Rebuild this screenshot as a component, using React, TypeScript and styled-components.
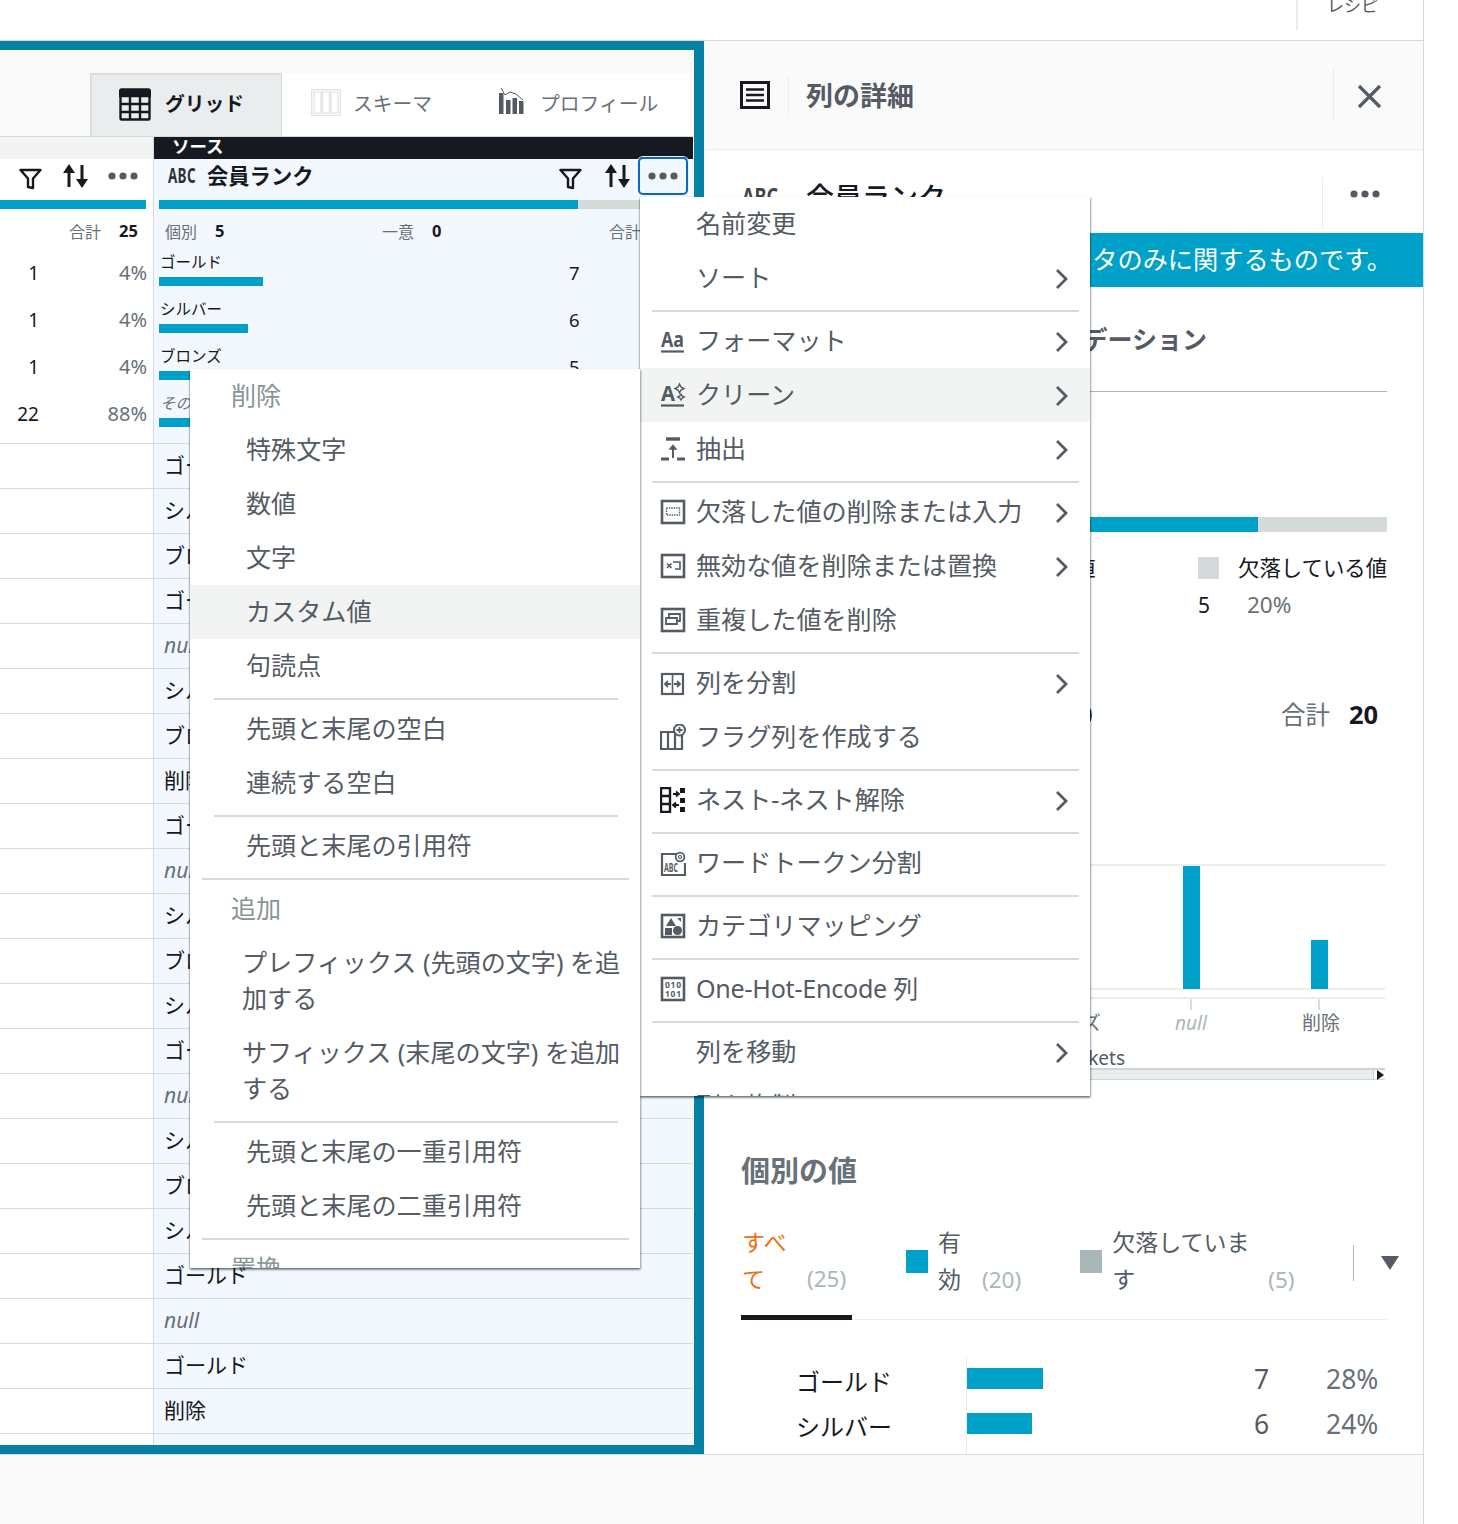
import React from "react";
import styled, { createGlobalStyle } from "styled-components";

const Global = createGlobalStyle`
  html, body { margin: 0; padding: 0; background: #fff; }
  body { font-family: "Noto Sans", "Noto Sans CJK JP", sans-serif; color: #16191f; }
  * { box-sizing: border-box; }
`;

const Page = styled.div`
  position: relative; width: 1424px; height: 1524px; overflow: hidden;
  border-right: 1px solid #d5dbdb; display: flex; flex-direction: column;
`;
const TopBar = styled.div`
  height: 41px; flex: none; border-bottom: 1px solid #d5dbdb; background: #fff;
  display: flex; justify-content: flex-end; align-items: flex-start; overflow: hidden;
`;
const RecipeTab = styled.div`
  width: 127px; height: 30px; border-left: 2px solid #eaeded; padding-left: 29px;
  font-size: 17px; line-height: 26px; color: #545b64;
  & > span { display: block; margin-top: -7px; }
`;
const Main = styled.div`display: flex; height: 1413px; flex: none;`;
const Footer = styled.div`flex: 1; background: #fafafa; border-top: 1px solid #d5dbdb;`;

const DataPanel = styled.div`
  width: 704px; flex: none; border: solid #0582a3; border-width: 9px 10px 9px 0;
  display: flex; flex-direction: column; overflow: hidden; background: #fafafa;
`;
const TabStrip = styled.div`
  height: 87px; flex: none; padding: 23px 0 0 90px; border-bottom: 1px solid #d5dbdb; display: flex;
`;
const ViewTabs = styled.div`display: flex; flex: 1; background: #fff; height: 63px;`;
const ViewTab = styled.div<{ $active?: boolean; $w: number; $pad: number; $gap: number }>`
  width: ${p => p.$w}px; padding: 0 0 5px ${p => p.$pad}px; display: flex; align-items: center; gap: ${p => p.$gap}px;
  font-size: 19.8px; font-weight: ${p => (p.$active ? 700 : 400)};
  color: ${p => (p.$active ? "#16191f" : "#687078")};
  background: ${p => (p.$active ? "#eaeded" : "#fff")};
  border: ${p => (p.$active ? "1px solid #d5dbdb" : "none")}; border-bottom: none;
  box-shadow: ${p => (p.$active ? "inset 1px 1px 2px rgba(0,0,0,.05)" : "none")};
`;
const GridIcon = styled.svg`margin-top: 3px; flex: none;`;
const ProfileIcon = styled.svg`margin-bottom: 3px; flex: none;`;
const GridArea = styled.div`display: flex; flex: 1; min-height: 0;`;
const Column = styled.div<{ $selected?: boolean }>`
  display: flex; flex-direction: column; overflow: hidden;
  width: ${p => (p.$selected ? "540px" : "154px")}; flex: none;
  background: ${p => (p.$selected ? "#f2f8fe" : "#fff")};
  border-right: 1px solid ${p => (p.$selected ? "#fff" : "#d5dbdb")};
`;
const ColumnCap = styled.div<{ $dark?: boolean }>`
  height: 22px; flex: none; overflow: hidden; padding-left: 18px;
  background: ${p => (p.$dark ? "#16191f" : "#f2f3f3")}; color: #fff;
  font-size: 17.5px; font-weight: 700; line-height: 19px;
`;
const Stats = styled.div`height: 285px; flex: none; border-bottom: 1px solid #d5dbdb; display: flex; flex-direction: column;`;
const ColHeader = styled.div<{ $selected?: boolean }>`
  height: 41px; flex: none; display: flex; align-items: center;
  padding: ${p => (p.$selected ? "0 5px 8px 14px" : "0 15px 8px 19px")};
  justify-content: ${p => (p.$selected ? "flex-start" : "space-between")};
`;
const FilterWrap = styled.span`display: flex; margin-top: 6px;`;
const TypeTag = styled.span`
  font-size: 21px; font-weight: 700; color: #2e333a; display: inline-block; width: 28px; margin: 0 11px 2px 0;
  transform: scaleX(.64); transform-origin: left center; white-space: nowrap; letter-spacing: .5px;
`;
const ColName = styled.span`font-size: 21.3px; font-weight: 700; color: #16191f; flex: 1; margin-bottom: 2px;`;
const HeaderIcons = styled.div`display: flex; align-items: center; gap: 22px; margin-right: 7px;`;
const FocusButton = styled.div`
  width: 50px; height: 38px; flex: none; border: 2.5px solid #0a68c4; border-radius: 5px;
  display: flex; align-items: center; justify-content: center; box-shadow: 0 0 0 1px #eef3f7;
`;
const CoverageBar = styled.div<{ $inset: string }>`
  height: 9px; flex: none; background: #d5dbdb; margin: ${p => p.$inset}; display: flex;
`;
const CoverageFill = styled.div`background: #00a1c9; height: 100%;`;
const TotalsA = styled.div`
  height: 41px; flex: none; display: flex; align-items: center; justify-content: flex-end; gap: 18px; padding: 2px 15px 0 0;
`;
const TotalsB = styled.div`
  height: 41px; flex: none; display: grid; grid-template-columns: 217px 227px auto; align-items: center; padding: 2px 0 0 11px;
`;
const StatPair = styled.div`display: flex; align-items: center; gap: 18px;`;
const StatLabel = styled.span`font-size: 16px; color: #687078;`;
const StatValue = styled.span`font-size: 16.5px; font-weight: 700; color: #16191f;`;
const CountRow = styled.div`height: 47px; flex: none; display: flex; align-items: center; padding: 0 6px 2px 0;`;
const CountNum = styled.span`width: 39px; text-align: right; font-size: 19px; color: #16191f;`;
const CountPct = styled.span`flex: 1; text-align: right; font-size: 20px; color: #687078;`;
const ValueRow = styled.div`height: 47px; flex: none; display: flex; padding-left: 5px;`;
const ValueMain = styled.div`width: 410px; display: flex; flex-direction: column;`;
const ValueName = styled.div<{ $italic?: boolean }>`
  height: 27px; font-size: 15.5px; line-height: 24px; padding-left: 1px; color: ${p => (p.$italic ? "#687078" : "#16191f")};
  font-style: ${p => (p.$italic ? "italic" : "normal")};
`;
const ValueBar = styled.div`height: 9px; background: #00a1c9;`;
const ValueCount = styled.div`font-size: 18.500px; line-height: 45px; color: #16191f;`;
const Cell = styled.div<{ $null?: boolean }>`
  height: 45px; flex: none; border-bottom: 1px solid #d5dbdb; padding-left: 10px;
  font-size: 21px; line-height: 43px;
  color: ${p => (p.$null ? "#687078" : "#16191f")}; font-style: ${p => (p.$null ? "italic" : "normal")};
`;

const DetailPanel = styled.div`flex: 1; overflow: hidden; background: #fff; display: flex; flex-direction: column;`;
const DetailHeader = styled.div`
  height: 109px; flex: none; background: #fafafa; border-bottom: 1px solid #eaeded;
  display: flex; align-items: center; padding-left: 36px;
`;
const HeaderDivider = styled.div`width: 1px; height: 38px; background: #eaeded; margin: 0 17px 0 18px;`;
const DetailTitle = styled.h2`margin: 0 0 2px; font-size: 27px; font-weight: 700; color: #545b64; flex: 1;`;
const CloseSlot = styled.div`
  width: 90px; height: 54px; border-left: 1px solid #eaeded; display: flex; align-items: center; padding: 2px 0 0 23px;
`;
const SubHeader = styled.div`height: 83px; flex: none; display: flex; align-items: center; padding-left: 38px; padding-top: 8px;`;
const SubTag = styled.span`
  font-size: 24px; font-weight: 700; color: #414750; width: 64px; display: inline-block;
  transform: scaleX(.75); transform-origin: left center;
`;
const SubName = styled.span`font-size: 28px; color: #16191f; flex: 1; font-weight: 500;`;
const SubMenu = styled.div`
  width: 101px; height: 50px; border-left: 1px solid #eaeded; margin-top: 13px; display: flex; align-items: center; padding: 0 0 16px 27px;
`;
const Banner = styled.div`
  height: 54px; flex: none; background: #00a1c9; color: #fff; font-size: 25.2px; line-height: 52px;
  text-align: right; padding-right: 31px; white-space: nowrap;
`;
const Section = styled.section`padding: 0 36px 0 37px; flex: none;`;
const SectionHead = styled.h3`
  margin: 35px 0 0; height: 70px; line-height: 34px; font-size: 25px; font-weight: 700; color: #545b64;
  border-bottom: 1px solid #aab7b8; text-align: right; padding-right: 180px; white-space: nowrap; overflow: hidden;
`;
const QualityBar = styled.div`height: 15px; background: #d5dbdb; margin-top: 125px; display: flex;`;
const Legend = styled.div`display: flex; margin: 25px 0 0 229px;`;
const LegendItem = styled.div<{ $w: number }>`width: ${p => p.$w}px;`;
const LegendHead = styled.div`display: flex; align-items: center; gap: 19px; font-size: 21.4px; line-height: 22px; white-space: nowrap;`;
const Swatch = styled.div<{ $color: string }>`width: 21px; height: 22px; flex: none; background: ${p => p.$color};`;
const LegendVals = styled.div`display: grid; grid-template-columns: 49px auto; margin-top: 14px; font-size: 21px; line-height: 24px;`;
const LegendPct = styled.span`color: #687078; font-size: 22.5px;`;
const ChartStats = styled.div`display: grid; grid-template-columns: 269px 271px auto; margin-top: 80px; height: 32px; align-items: center;`;
const BigPair = styled.div`display: flex; align-items: center; gap: 19px;`;
const BigLabel = styled.span`font-size: 24.5px; color: #687078; margin-top: -2px;`;
const BigValue = styled.span`font-size: 25.5px; font-weight: 700; color: #16191f;`;
const ChartSvg = styled.svg`display: block; margin-top: 135px; width: 644px; height: 178px; overflow: visible;`;
const AxisName = styled.div`font-size: 19px; line-height: 24px; color: #545b64; padding-left: 314px; margin-top: 4px;`;
const ScrollTrack = styled.div`
  width: 644px; height: 12px; margin-top: -2px; background: #eaeded; border: solid #cfd5d5; border-width: 2px 0 1px;
  display: flex; justify-content: flex-end; align-items: center;
`;
const ScrollEnd = styled.div`
  width: 12px; height: 100%; background: #fafafa; border-left: 1px solid #cfd5d5;
  display: flex; align-items: center; justify-content: flex-end; padding-right: 1px;
`;
const ScrollArrow = styled.div`
  width: 0; height: 0; border-left: 7px solid #16191f; border-top: 5px solid transparent; border-bottom: 5px solid transparent;
`;
const DistinctTitle = styled.h3`margin: 71px 0 0; font-size: 29px; line-height: 40px; font-weight: 700; color: #687078;`;
const ValueTabs = styled.div`
  display: flex; align-items: center; height: 95px; margin-top: 34px; border-bottom: 1px solid #eaeded; position: relative;
`;
const ValueTab = styled.div<{ $active?: boolean; $ml: number; $w?: number }>`
  display: flex; align-items: center; height: 100%; margin-left: ${p => p.$ml}px; padding-bottom: ${p => (p.$active ? 19 : 22)}px;
  ${p => (p.$w ? `width: ${p.$w}px;` : "")}
  ${p => (p.$active ? "border-bottom: 5px solid #16191f; margin-bottom: -1px; padding-left: 1px;" : "")}
`;
const TabSwatch = styled(Swatch)`width: 22px; height: 23px; margin-right: 10px;`;
const TabLabel = styled.div<{ $active?: boolean; $w: number }>`
  width: ${p => p.$w}px; font-size: 23px; line-height: 37px; flex: none;
  color: ${p => (p.$active ? "#ec7211" : "#545b64")};
`;
const TabCount = styled.div<{ $ml: number }>`
  font-size: 22.5px; color: #aab7b8; margin-left: ${p => p.$ml}px; align-self: flex-end; line-height: 37px; margin-bottom: -1px;
`;
const TabDivider = styled.div`width: 1px; height: 36px; background: #aab7b8; margin-left: auto; margin-right: 33px; margin-top: -19px;`;
const TabDrop = styled.div`
  position: absolute; right: -12px; top: 31px; width: 0; height: 0;
  border-top: 14px solid #545b64; border-left: 9px solid transparent; border-right: 9px solid transparent;
`;
const DistinctList = styled.div`margin-top: 36px;`;
const DistinctRow = styled.div`display: flex; height: 45px;`;
const DistinctName = styled.div`width: 225px; padding: 7px 0 0 55px; font-size: 24px; line-height: 38px; color: #16191f;`;
const DistinctBarCell = styled.div`width: 288px; border-left: 1px solid #eaeded; padding-top: 12px;`;
const DistinctBar = styled.div`height: 21px; background: #00a1c9;`;
const DistinctNum = styled.div`width: 72px; padding-top: 3px; font-size: 26.5px; line-height: 40px; color: #545b64;`;
const DistinctPct = styled.div`padding-top: 3px; font-size: 26.5px; line-height: 40px; color: #687078;`;

const Menu = styled.div<{ $left: number; $top: number }>`
  position: absolute; left: ${p => p.$left}px; top: ${p => p.$top}px; width: 450px; height: 899px;
  background: #fff; overflow: hidden; z-index: 5;
  box-shadow: 0 2px 2px 0 rgba(0,28,36,.35), 1px 1px 2px 0 rgba(0,28,36,.3), -1px 1px 1px 0 rgba(0,28,36,.15);
`;
const MenuItem = styled.div<{ $hover?: boolean; $pad?: number }>`
  min-height: 54px; display: flex; align-items: center; font-size: 25.1px; line-height: 36px; color: #545b64; white-space: nowrap;
  padding: 8px 20px 10px ${p => p.$pad ?? 20}px; background: ${p => (p.$hover ? "#f2f3f3" : "#fff")};
`;
const MenuGroupLabel = styled.div`height: 54px; line-height: 52px; padding-left: 41px; font-size: 25.1px; color: #879596;`;
const MenuIconSlot = styled.span`width: 26px; height: 26px; flex: none; margin: 2px 10px 0 0; display: flex;`;
const MenuText = styled.span<{ $latin?: boolean }>`flex: 1; letter-spacing: ${p => (p.$latin ? "-.25px" : "0")};`;
const MenuChevron = styled.svg`flex: none; margin-top: 4px; margin-right: 1px;`;
const MenuSep = styled.div<{ $wide?: boolean }>`
  height: 2px; background: #d5dbdb; margin: 5px ${p => (p.$wide ? "11px" : "22px")} 2px ${p => (p.$wide ? "12px" : "24px")};
`;
const MenuSepRight = styled(MenuSep)`margin: 5px 11px 2px 12px;`;

const C = "#545b64";
const Svg = (p: React.SVGProps<SVGSVGElement>) => (
  <svg width={26} height={26} viewBox="0 0 26 26" fill="none" stroke={C} strokeWidth={2} {...p} />
);
const Chevron = () => (
  <MenuChevron width="14" height="22" viewBox="0 0 14 22" fill="none" stroke={C} strokeWidth="2.800"><path d="M2 2l9 9-9 9" /></MenuChevron>
);
const Dots = () => (
  <svg width="30" height="8" viewBox="0 0 30 8" fill={C}><circle cx="4" cy="4" r="3.600" /><circle cx="15" cy="4" r="3.600" /><circle cx="26" cy="4" r="3.600" /></svg>
);
const FilterIcon = () => (
  <FilterWrap>
    <svg width="23" height="22" viewBox="0 0 23 22" fill="none" stroke="#16191f" strokeWidth="2.400" strokeLinejoin="round">
      <path d="M1.500 2h20l-7.500 8.500V20l-5-1v-8.500z" />
    </svg>
  </FilterWrap>
);
const SortIcon = () => (
  <svg width="27" height="24" viewBox="0 0 27 24" fill="#16191f">
    <path d="M7 0l6 9H8.500v14h-3V9H1zM20 24l-6-9h4.500V1h3v14H26z" />
  </svg>
);

const icons: Record<string, React.ReactNode> = {
  aa: (
    <Svg>
      <text x="1" y="19" fontSize="22" fontWeight="700" fill={C} stroke="none" textLength="23" lengthAdjust="spacingAndGlyphs" fontFamily="Noto Sans">Aa</text>
      <path d="M1 23.500h23" strokeWidth="2.200" />
    </Svg>
  ),
  clean: (
    <Svg>
      <text x="1" y="19" fontSize="22" fontWeight="700" fill={C} stroke="none" textLength="14" lengthAdjust="spacingAndGlyphs" fontFamily="Noto Sans">A</text>
      <path d="M19.500 2l1.500 3 3 1.500-3 1.500-1.500 3-1.500-3-3-1.500 3-1.500zM21 12l1.200 2 2 1-2 1-1.200 2-1.200-2-2-1 2-1z" strokeWidth="1.400" />
      <path d="M1 23.500h23" strokeWidth="2.200" />
    </Svg>
  ),
  extract: (
    <Svg>
      <path d="M6 3h14" strokeWidth="3.400" />
      <path d="M13 22V10" strokeWidth="2" />
      <path d="M9 13.500l4-5 4 5z" fill={C} strokeWidth="0.500" />
      <path d="M1 23h8M17 23h8" strokeWidth="3" />
    </Svg>
  ),
  missing: (
    <Svg>
      <rect x="2" y="2" width="22" height="22" strokeWidth="2.600" />
      <rect x="6.500" y="9" width="13" height="7" strokeWidth="1.400" strokeDasharray="1.400 1" />
    </Svg>
  ),
  invalid: (
    <Svg>
      <rect x="2" y="2" width="22" height="22" strokeWidth="2.600" />
      <path d="M7 10.500l4.500 4.500M11.500 10.500L7 15M13 9h7v7h-5" strokeWidth="1.600" />
    </Svg>
  ),
  dup: (
    <Svg>
      <rect x="2" y="2" width="22" height="22" strokeWidth="2.600" />
      <path d="M9 10V7h11v7h-3M6 11h11v6H6z" strokeWidth="1.800" />
    </Svg>
  ),
  split: (
    <Svg>
      <rect x="2" y="4" width="21" height="20" strokeWidth="2.200" />
      <path d="M12.500 4v20" strokeWidth="1.600" />
      <path d="M11 14H5M8 11l-3 3 3 3M14 14h6M17 11l3 3-3 3" strokeWidth="1.800" />
    </Svg>
  ),
  flag: (
    <Svg>
      <path d="M1 8h21v17H1zM8 8v17M15 8v17" strokeWidth="2.200" />
      <circle cx="19.500" cy="6" r="5.500" fill="#fff" strokeWidth="2" />
      <path d="M19.500 3v6M16.500 6h6" strokeWidth="1.800" />
    </Svg>
  ),
  nest: (
    <Svg stroke="#16191f">
      <path d="M1 1h9v24H1zM1 9h9M1 17h9" strokeWidth="2.400" />
      <path d="M13 7h6M16 4.500L19 7l-3 2.500M19 18h-6M16 15.500L13 18l3 2.500" strokeWidth="1.800" />
      <path d="M20 1h5v5h-5zM20 11h5v5h-5zM20 20h5v5h-5z" fill="#16191f" strokeWidth="0" />
    </Svg>
  ),
  token: (
    <Svg>
      <path d="M17 4H2v21h23V13" strokeWidth="2.200" />
      <text x="4" y="22" fontSize="12" fontWeight="700" fill={C} stroke="none" textLength="14" lengthAdjust="spacingAndGlyphs" fontFamily="Noto Sans">ABC</text>
      <circle cx="20" cy="7" r="4.300" fill="#fff" strokeWidth="1.800" />
      <circle cx="20" cy="7" r="1.500" strokeWidth="1.200" />
    </Svg>
  ),
  category: (
    <Svg>
      <rect x="2" y="2" width="22" height="22" strokeWidth="2.600" />
      <path d="M11 5l5 8H6zM17 5h4v4zM5 15h7v7H5z" fill={C} stroke="none" />
      <circle cx="17.500" cy="17.500" r="4.500" fill={C} stroke="none" />
    </Svg>
  ),
  onehot: (
    <Svg>
      <rect x="2" y="2" width="22" height="22" strokeWidth="2.600" />
      <text x="5" y="12" fontSize="8.500" fontWeight="700" fill={C} stroke="none" textLength="16" fontFamily="Noto Sans">010</text>
      <text x="5" y="21" fontSize="8.500" fontWeight="700" fill={C} stroke="none" textLength="16" fontFamily="Noto Sans">101</text>
    </Svg>
  ),
};

type Entry = { label?: string; icon?: string; sub?: boolean; hover?: boolean; sep?: boolean; latin?: boolean };
const mainMenu: Entry[] = [
  { label: "名前変更" }, { label: "ソート", sub: true }, { sep: true },
  { label: "フォーマット", icon: "aa", sub: true }, { label: "クリーン", icon: "clean", sub: true, hover: true }, { label: "抽出", icon: "extract", sub: true }, { sep: true },
  { label: "欠落した値の削除または入力", icon: "missing", sub: true }, { label: "無効な値を削除または置換", icon: "invalid", sub: true }, { label: "重複した値を削除", icon: "dup" }, { sep: true },
  { label: "列を分割", icon: "split", sub: true }, { label: "フラグ列を作成する", icon: "flag" }, { sep: true },
  { label: "ネスト-ネスト解除", icon: "nest", sub: true }, { sep: true },
  { label: "ワードトークン分割", icon: "token" }, { sep: true },
  { label: "カテゴリマッピング", icon: "category" }, { sep: true },
  { label: "One-Hot-Encode 列", icon: "onehot", latin: true }, { sep: true },
  { label: "列を移動", sub: true }, { label: "列を複製" },
];

const cells = ["ゴールド", "シルバー", "ブロンズ", "ゴールド", "null", "シルバー", "ブロンズ", "削除", "ゴールド", "null", "シルバー", "ブロンズ", "シルバー", "ゴールド", "null", "シルバー", "ブロンズ", "シルバー", "ゴールド", "null", "ゴールド", "削除", "シルバー"];
const leftCounts = [["1", "4%"], ["1", "4%"], ["1", "4%"], ["22", "88%"]];
const topValues = [
  { name: "ゴールド", w: 104, n: 7 }, { name: "シルバー", w: 89, n: 6 }, { name: "ブロンズ", w: 74, n: 5 }, { name: "その他", w: 74, n: 2, italic: true },
];

const Chart = () => {
  const bars = [{ x: 66, h: 105 }, { x: 194, h: 90 }, { x: 322, h: 76 }, { x: 442, h: 123 }, { x: 570, h: 49 }];
  const labels = [["ゴールド", 66], ["シルバー", 194], ["ブロンズ", 322], ["null", 450], ["削除", 578]] as const;
  return (
    <ChartSvg viewBox="0 0 644 178">
      <path d="M0 1h644M0 125h644M0 134h644" stroke="#eaeded" strokeWidth="2" />
      {bars.map(b => (
        <rect key={b.x} x={b.x} y={125 - b.h} width="17" height={b.h} fill="#00a1c9" />
      ))}
      {labels.map(([t, x]) => (
        <g key={t}>
          <path d={`M${x} 135v11`} stroke="#c9d3e3" strokeWidth="1.500" />
          <text x={x + (t === "削除" ? 2 : 0)} y="166" textAnchor="middle" fontSize="19" fill={t === "null" ? "#aab7b8" : "#687078"} fontStyle={t === "null" ? "italic" : "normal"} fontFamily="'Noto Sans','Noto Sans CJK JP',sans-serif">{t}</text>
        </g>
      ))}
    </ChartSvg>
  );
};

export default function App() {
  return (
    <>
      <Global />
      <Page>
        <TopBar><RecipeTab><span>レシピ</span></RecipeTab></TopBar>
        <Main>
          <DataPanel>
            <TabStrip>
              <ViewTabs>
                <ViewTab $active $w={192} $pad={28} $gap={14}>
                  <GridIcon width="32" height="33" viewBox="0 0 32 33" fill="none" stroke="#16191f" strokeWidth="2.400">
                    <rect x="1.500" y="1.500" width="29" height="30" rx="1" />
                    <path d="M1 3h30v5H1z" fill="#16191f" />
                    <path d="M1 16h30M1 24h30M11 8v24M21 8v24" />
                  </GridIcon>
                  グリッド
                </ViewTab>
                <ViewTab $w={190} $pad={29} $gap={12}>
                  <svg width="30" height="27" viewBox="0 0 30 27" fill="none" stroke="#dde1e1" strokeWidth="1.200"><rect x=".7" y=".7" width="28.600" height="25.600" /><path d="M3 3h7v21H3zM11.500 3h7v21h-7zM20 3h7v21h-7z" /></svg>
                  スキーマ
                </ViewTab>
                <ViewTab $w={220} $pad={27} $gap={16}>
                  <ProfileIcon width="25" height="27" viewBox="0 0 25 27" fill="#545b64">
                    <path d="M0 6h4.500v21H0zM7 13h4.500v14H7zM13.500 11H18v16h-4.500zM20 14h4.500v13H20z" />
                    <path d="M2 1l4 7 5-3 6 2 7 6" fill="none" stroke="#545b64" strokeWidth="1" />
                  </ProfileIcon>
                  プロフィール
                </ViewTab>
              </ViewTabs>
            </TabStrip>
            <GridArea>
              <Column>
                <ColumnCap />
                <Stats>
                  <ColHeader><FilterIcon /><SortIcon /><Dots /></ColHeader>
                  <CoverageBar $inset="0 7px 0 0"><CoverageFill style={{ width: "100%" }} /></CoverageBar>
                  <TotalsA><StatLabel>合計</StatLabel><StatValue>25</StatValue></TotalsA>
                  {leftCounts.map(([n, p], i) => (
                    <CountRow key={i}><CountNum>{n}</CountNum><CountPct>{p}</CountPct></CountRow>
                  ))}
                </Stats>
                {cells.map((_, i) => <Cell key={i} />)}
              </Column>
              <Column $selected>
                <ColumnCap $dark>ソース</ColumnCap>
                <Stats>
                  <ColHeader $selected>
                    <TypeTag>ABC</TypeTag>
                    <ColName>会員ランク</ColName>
                    <HeaderIcons><FilterIcon /><SortIcon /></HeaderIcons>
                    <FocusButton><Dots /></FocusButton>
                  </ColHeader>
                  <CoverageBar $inset="0 5px"><CoverageFill style={{ width: 419 }} /></CoverageBar>
                  <TotalsB>
                    <StatPair><StatLabel>個別</StatLabel><StatValue>5</StatValue></StatPair>
                    <StatPair><StatLabel>一意</StatLabel><StatValue>0</StatValue></StatPair>
                    <StatPair><StatLabel>合計</StatLabel><StatValue>25</StatValue></StatPair>
                  </TotalsB>
                  {topValues.map(v => (
                    <ValueRow key={v.name}>
                      <ValueMain>
                        <ValueName $italic={v.italic}>{v.name}</ValueName>
                        <ValueBar style={{ width: v.w }} />
                      </ValueMain>
                      <ValueCount>{v.n}</ValueCount>
                    </ValueRow>
                  ))}
                </Stats>
                {cells.map((t, i) => <Cell key={i} $null={t === "null"}>{t}</Cell>)}
              </Column>
            </GridArea>
          </DataPanel>

          <DetailPanel>
            <DetailHeader>
              <svg width="30" height="28" viewBox="0 0 30 28" fill="none" stroke="#16191f" strokeWidth="3">
                <rect x="1.500" y="1.500" width="27" height="25" />
                <path d="M6 8.500h18M6 14h18M6 19.500h18" strokeWidth="2.400" />
              </svg>
              <HeaderDivider />
              <DetailTitle>列の詳細</DetailTitle>
              <CloseSlot>
                <svg width="25" height="25" viewBox="0 0 25 25" fill="none" stroke="#545b64" strokeWidth="3.200"><path d="M2 2l21 21M23 2L2 23" /></svg>
              </CloseSlot>
            </DetailHeader>
            <SubHeader>
              <SubTag>ABC</SubTag>
              <SubName>会員ランク</SubName>
              <SubMenu><Dots /></SubMenu>
            </SubHeader>
            <Banner>この統計情報はサンプルデータのみに関するものです。</Banner>
            <Section>
              <SectionHead>データ品質のバリデーション</SectionHead>
              <QualityBar><CoverageFill style={{ width: 517 }} /></QualityBar>
              <Legend>
                <LegendItem $w={228}>
                  <LegendHead><Swatch $color="#00a1c9" />有効な値</LegendHead>
                  <LegendVals><span>20</span><LegendPct>80%</LegendPct></LegendVals>
                </LegendItem>
                <LegendItem $w={189}>
                  <LegendHead><Swatch $color="#d5dbdb" />欠落している値</LegendHead>
                  <LegendVals><span>5</span><LegendPct>20%</LegendPct></LegendVals>
                </LegendItem>
              </Legend>
              <ChartStats>
                <BigPair><BigLabel>個別</BigLabel><BigValue>4</BigValue></BigPair>
                <BigPair><BigLabel>一意</BigLabel><BigValue>0</BigValue></BigPair>
                <BigPair><BigLabel>合計</BigLabel><BigValue>20</BigValue></BigPair>
              </ChartStats>
              <Chart />
              <AxisName>Buckets</AxisName>
              <ScrollTrack><ScrollEnd><ScrollArrow /></ScrollEnd></ScrollTrack>
              <DistinctTitle>個別の値</DistinctTitle>
              <ValueTabs>
                <ValueTab $active $ml={0} $w={111}>
                  <TabLabel $active $w={46}>すべて</TabLabel>
                  <TabCount $ml={19}>(25)</TabCount>
                </ValueTab>
                <ValueTab $ml={54}>
                  <TabSwatch $color="#00a1c9" />
                  <TabLabel $w={24}>有効</TabLabel>
                  <TabCount $ml={20}>(20)</TabCount>
                </ValueTab>
                <ValueTab $ml={59}>
                  <TabSwatch $color="#aab7b8" />
                  <TabLabel $w={138}>欠落しています</TabLabel>
                  <TabCount $ml={18}>(5)</TabCount>
                </ValueTab>
                <TabDivider />
                <TabDrop />
              </ValueTabs>
              <DistinctList>
                {[["ゴールド", 76, 7, "28%"], ["シルバー", 65, 6, "24%"], ["ブロンズ", 54, 5, "20%"]].map(([n, w, c, p]) => (
                  <DistinctRow key={n as string}>
                    <DistinctName>{n}</DistinctName>
                    <DistinctBarCell><DistinctBar style={{ width: w as number }} /></DistinctBarCell>
                    <DistinctNum>{c}</DistinctNum>
                    <DistinctPct>{p}</DistinctPct>
                  </DistinctRow>
                ))}
              </DistinctList>
            </Section>
          </DetailPanel>
        </Main>
        <Footer />

        <Menu $left={640} $top={197}>
          {mainMenu.map((e, i) =>
            e.sep ? (
              <MenuSepRight key={i} />
            ) : (
              <MenuItem key={i} $hover={e.hover}>
                <MenuIconSlot>{e.icon ? icons[e.icon] : null}</MenuIconSlot>
                <MenuText $latin={e.latin}>{e.label}</MenuText>
                {e.sub && <Chevron />}
              </MenuItem>
            )
          )}
        </Menu>

        <Menu $left={190} $top={369}>
          <MenuGroupLabel>削除</MenuGroupLabel>
          <MenuItem $pad={56}>特殊文字</MenuItem>
          <MenuItem $pad={56}>数値</MenuItem>
          <MenuItem $pad={56}>文字</MenuItem>
          <MenuItem $pad={56} $hover>カスタム値</MenuItem>
          <MenuItem $pad={56}>句読点</MenuItem>
          <MenuSep />
          <MenuItem $pad={56}>先頭と末尾の空白</MenuItem>
          <MenuItem $pad={56}>連続する空白</MenuItem>
          <MenuSep />
          <MenuItem $pad={56}>先頭と末尾の引用符</MenuItem>
          <MenuSep $wide />
          <MenuGroupLabel>追加</MenuGroupLabel>
          <MenuItem $pad={52}><span>プレフィックス (先頭の文字) を追<br />加する</span></MenuItem>
          <MenuItem $pad={52}><span>サフィックス (末尾の文字) を追加<br />する</span></MenuItem>
          <MenuSep />
          <MenuItem $pad={56}>先頭と末尾の一重引用符</MenuItem>
          <MenuItem $pad={56}>先頭と末尾の二重引用符</MenuItem>
          <MenuSep $wide />
          <MenuGroupLabel>置換</MenuGroupLabel>
        </Menu>
      </Page>
    </>
  );
}
